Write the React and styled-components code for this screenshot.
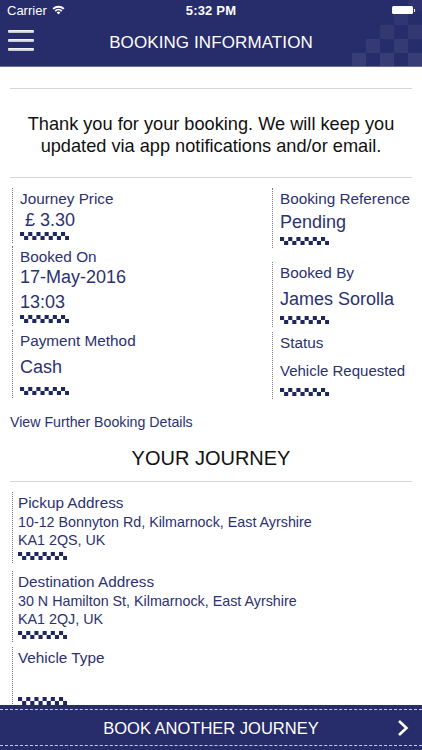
import React from 'react';
import styled, { createGlobalStyle } from 'styled-components';

const NAVY = '#272c6a';
const INK = '#2c3170';

const Global = createGlobalStyle`
  html, body {
    margin: 0;
    padding: 0;
    background: #fff;
    font-family: "Liberation Sans", Arial, sans-serif;
  }
`;

const Page = styled.div`
  width: 422px;
  height: 750px;
  display: flex;
  flex-direction: column;
  overflow: hidden;
  background: #fff;
`;

const Header = styled.header`
  position: relative;
  background: ${NAVY};
  border-bottom: 1px solid #6a6f9c;
  overflow: hidden;
  flex-shrink: 0;
`;

const HeaderDeco = styled.svg`
  position: absolute;
  right: 0;
  top: 0;
`;

const StatusBar = styled.div`
  position: relative;
  height: 20px;
  display: grid;
  grid-template-columns: 1fr auto 1fr;
  align-items: center;
  padding: 0 7px;
  color: #fff;
  font-size: 13px;
`;

const Carrier = styled.div`
  display: flex;
  align-items: center;
  gap: 5px;
`;

const Time = styled.div`
  font-weight: bold;
  font-size: 13px;
  letter-spacing: 0.2px;
`;

const Battery = styled.div`
  justify-self: end;
  display: flex;
  align-items: center;
`;

const BatteryBody = styled.div`
  width: 21px;
  height: 8px;
  background: #fff;
  border-radius: 1.5px;
`;

const BatteryNub = styled.div`
  width: 1.5px;
  height: 3px;
  background: #fff;
  margin-left: 1px;
`;

const NavBar = styled.div`
  position: relative;
  height: 46px;
  display: flex;
  align-items: center;
  justify-content: center;
`;

const Burger = styled.div`
  position: absolute;
  left: 8px;
  top: 10px;
  width: 26px;
  display: flex;
  flex-direction: column;
  gap: 6px;
`;

const BurgerBar = styled.div`
  height: 3px;
  border-radius: 1px;
  background: linear-gradient(#ffffff, #b9bccc);
`;

const Title = styled.h1`
  margin: 0;
  color: #fff;
  font-size: 17px;
  font-weight: normal;
  letter-spacing: 0.1px;
`;

const Content = styled.main`
  flex: 1;
  overflow: hidden;
  padding: 0 10px;
`;

const Divider = styled.div`
  height: 1px;
  background: #d6d6d6;
  margin-top: ${p => p.$top}px;
`;

const ThankYou = styled.p`
  margin: 24px 0 0;
  text-align: center;
  color: #111;
  font-size: 18.2px;
  line-height: 22px;
`;

const InfoGrid = styled.div`
  display: grid;
  grid-template-columns: 260px 1fr;
  padding-left: 2px;
  margin-top: 10px;
`;

const Column = styled.div`
  display: flex;
  flex-direction: column;
`;

const Block = styled.div`
  border-left: 1px dotted #7a7a7a;
  padding: 2px 0 3px ${p => p.$pad || 7}px;
  margin-top: ${p => p.$top || 0}px;
`;

const Label = styled.div`
  color: ${INK};
  font-size: 15.3px;
  line-height: 18px;
`;

const Value = styled.div`
  color: ${INK};
  font-size: ${p => p.$size || 18}px;
  line-height: ${p => (p.$size ? p.$size + 4 : 22)}px;
  margin-top: ${p => p.$top || 0}px;
  white-space: pre;
`;

const Address = styled.div`
  color: ${INK};
  font-size: 14.3px;
  line-height: 18px;
  margin-top: 1px;
`;

const CheckerWrap = styled.div`
  margin-top: ${p => p.$top || 0}px;
  height: 8px;
  display: flex;
`;

const DetailsLink = styled.a`
  display: block;
  margin-top: 15px;
  color: ${INK};
  font-size: 14.2px;
  line-height: 17px;
  text-decoration: none;
`;

const SectionTitle = styled.h2`
  margin: 15px 0 0;
  text-align: center;
  color: #111;
  font-size: 20px;
  line-height: 24px;
  font-weight: normal;
`;

const Journey = styled.div`
  padding-left: 2px;
`;

const BottomBar = styled.button`
  flex-shrink: 0;
  height: 45px;
  background: ${NAVY};
  border: none;
  padding: 4px 0;
  display: flex;
  flex-direction: column;
  cursor: pointer;
`;

const BottomInner = styled.div`
  flex: 1;
  width: 100%;
  border-top: 1px dashed #c9cbe0;
  border-bottom: 1px dashed #c9cbe0;
  display: flex;
  align-items: center;
  justify-content: center;
  position: relative;
`;

const BottomText = styled.span`
  color: #fff;
  font-family: "Liberation Sans", Arial, sans-serif;
  font-size: 16.5px;
  margin-top: 1px;
`;

const Chevron = styled.svg`
  position: absolute;
  right: 13px;
  top: 50%;
  transform: translateY(-50%);
`;

function Checker({ top }) {
  const cols = 12;
  const c = 4.1;
  const rects = [];
  for (let i = 0; i < cols; i++) {
    rects.push(<rect key={i} x={i * c} y={i % 2 ? 4 : 0} width={c} height={4} fill="#20265e" />);
  }
  return (
    <CheckerWrap $top={top}>
      <svg width={cols * c} height="8" viewBox={`0 0 ${cols * c} 8`}>{rects}</svg>
    </CheckerWrap>
  );
}

function Wifi() {
  return (
    <svg width="13" height="10" viewBox="0 0 13 10">
      <path d="M0.5 3.3 A8.5 8.5 0 0 1 12.5 3.3 L11.2 4.6 A6.6 6.6 0 0 0 1.8 4.6 Z" fill="#fff" />
      <path d="M2.6 5.4 A5.5 5.5 0 0 1 10.4 5.4 L9.1 6.7 A3.6 3.6 0 0 0 3.9 6.7 Z" fill="#fff" />
      <path d="M4.7 7.5 A2.5 2.5 0 0 1 8.3 7.5 L6.5 9.4 Z" fill="#fff" />
    </svg>
  );
}

function Deco() {
  const s = 14;
  const cells = [
    [0, 4], [1, 3], [2, 2], [2, 4], [3, 1], [3, 3], [4, 0], [4, 2], [4, 4]
  ];
  return (
    <HeaderDeco width="70" height="67" viewBox="0 0 70 67">
      {cells.map(([r, c], i) => (
        <rect key={i} x={c * s} y={r * s - 3} width={s} height={s} fill="#fff" opacity={0.035 + r * 0.012} />
      ))}
    </HeaderDeco>
  );
}

export default function App() {
  return (
    <Page>
      <Global />
      <Header>
        <Deco />
        <StatusBar>
          <Carrier>Carrier <Wifi /></Carrier>
          <Time>5:32 PM</Time>
          <Battery><BatteryBody /><BatteryNub /></Battery>
        </StatusBar>
        <NavBar>
          <Burger>
            <BurgerBar />
            <BurgerBar />
            <BurgerBar />
          </Burger>
          <Title>BOOKING INFORMATION</Title>
        </NavBar>
      </Header>

      <Content>
        <Divider $top={21} />
        <ThankYou>
          Thank you for your booking. We will keep you<br />
          updated via app notifications and/or email.
        </ThankYou>
        <Divider $top={20} />

        <InfoGrid>
          <Column>
            <Block>
              <Label>Journey Price</Label>
              <Value $top={1}>{' £ 3.30'}</Value>
              <Checker top={1} />
            </Block>
            <Block $top={3}>
              <Label>Booked On</Label>
              <Value>17-May-2016</Value>
              <Value $top={3}>13:03</Value>
              <Checker top={2} />
            </Block>
            <Block $top={4}>
              <Label>Payment Method</Label>
              <Value $top={6}>Cash</Value>
              <Checker top={9} />
            </Block>
          </Column>
          <Column>
            <Block>
              <Label>Booking Reference</Label>
              <Value $top={3}>Pending</Value>
              <Checker top={4} />
            </Block>
            <Block $top={14}>
              <Label>Booked By</Label>
              <Value $top={6}>James Sorolla</Value>
              <Checker top={6} />
            </Block>
            <Block $top={5}>
              <Label>Status</Label>
              <Value $top={9} $size={15}>Vehicle Requested</Value>
              <Checker top={8} />
            </Block>
          </Column>
        </InfoGrid>

        <DetailsLink>View Further Booking Details</DetailsLink>
        <SectionTitle>YOUR JOURNEY</SectionTitle>
        <Divider $top={11} />

        <Journey>
          <Block $pad={5} $top={10}>
            <Label>Pickup Address</Label>
            <Address>10-12 Bonnyton Rd, Kilmarnock, East Ayrshire<br />KA1 2QS, UK</Address>
            <Checker top={3} />
          </Block>
          <Block $pad={5} $top={8}>
            <Label>Destination Address</Label>
            <Address>30 N Hamilton St, Kilmarnock, East Ayrshire<br />KA1 2QJ, UK</Address>
            <Checker top={3} />
          </Block>
          <Block $pad={5} $top={5}>
            <Label>Vehicle Type</Label>
            <Checker top={30} />
          </Block>
        </Journey>
      </Content>

      <BottomBar>
        <BottomInner>
          <BottomText>BOOK ANOTHER JOURNEY</BottomText>
          <Chevron width="12" height="18" viewBox="0 0 12 18">
            <path d="M2 2 L9.5 9 L2 16" stroke="#fff" strokeWidth="2.6" fill="none" />
          </Chevron>
        </BottomInner>
      </BottomBar>
    </Page>
  );
}
